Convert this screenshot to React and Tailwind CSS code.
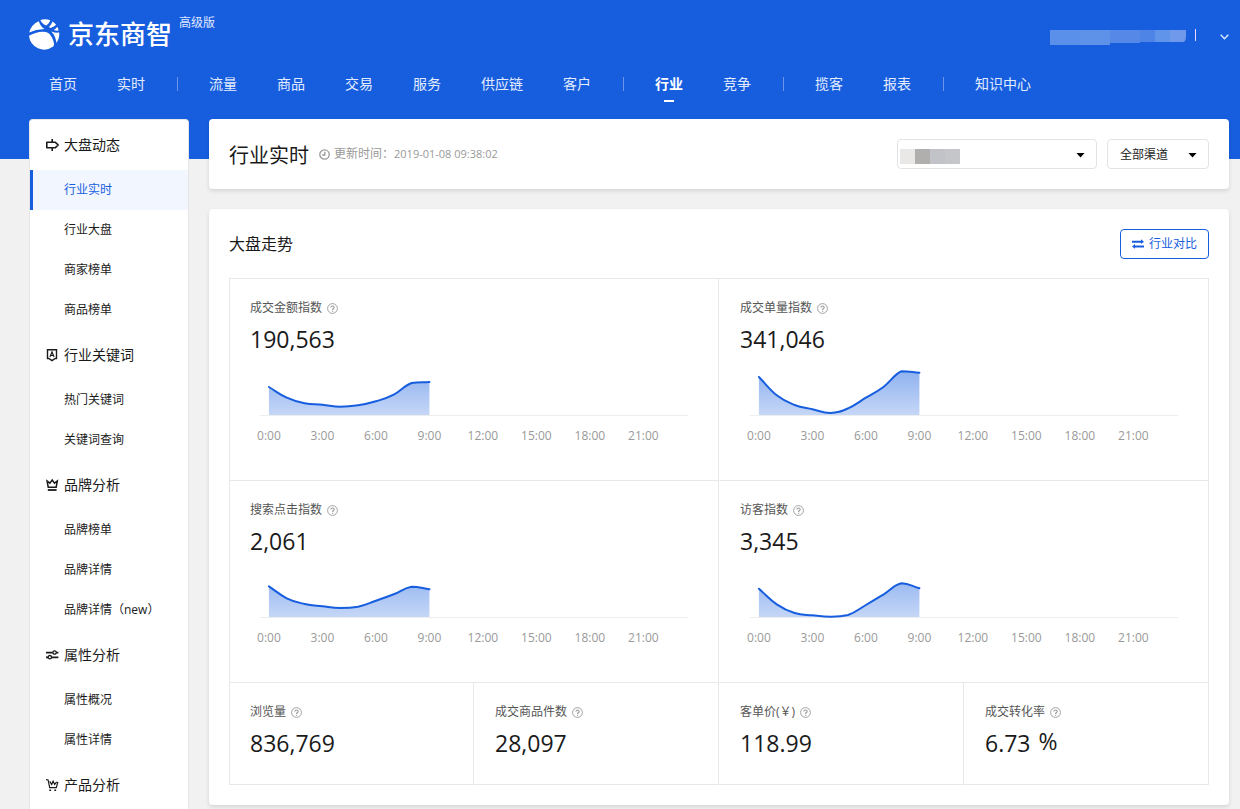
import { useId } from 'react';

const NAV_GROUPS = [
  ['首页', '实时'],
  ['流量', '商品', '交易', '服务', '供应链', '客户'],
  ['行业', '竞争'],
  ['揽客', '报表'],
  ['知识中心'],
];

const HOURS = ['0:00', '3:00', '6:00', '9:00', '12:00', '15:00', '18:00', '21:00'];

const TRENDS = [
  { label: '成交金额指数', value: '190,563', data: [28, 17.3, 11.7, 10.3, 8.3, 9.7, 13.7, 20.3, 32, 33] },
  { label: '成交单量指数', value: '341,046', data: [38, 19.7, 10, 5.7, 2, 6.7, 17.3, 28.3, 43.7, 42.3] },
  { label: '搜索点击指数', value: '2,061', data: [30.7, 18.7, 13, 10.7, 9, 10.3, 16.3, 22.7, 30.3, 27.7] },
  { label: '访客指数', value: '3,345', data: [28.3, 12.7, 4, 1.7, 0.3, 2, 12, 22.7, 33.7, 28.7] },
];

const TOTALS = [
  { label: '浏览量', value: '836,769' },
  { label: '成交商品件数', value: '28,097' },
  { label: '客单价(￥)', value: '118.99' },
  { label: '成交转化率', value: '6.73', unit: '%' },
];

function SignIcon() {
  return (
    <svg className="h-[14px] w-[14px]" viewBox="0 0 14 14" fill="none" stroke="currentColor" strokeWidth="1.6" aria-hidden="true">
      <path d="M.8 4.3h8.6L12.2 7 9.4 9.7H.8z" strokeLinejoin="round" />
      <path d="M6.2 1v3.3M6.2 9.7V13" />
    </svg>
  );
}

function KeywordIcon() {
  return (
    <svg className="h-[14px] w-[14px]" viewBox="0 0 14 14" fill="none" stroke="currentColor" aria-hidden="true">
      <path d="M1.5 1.8h9v8.700H9.200L6 12.600 2.800 10.500H1.500z" strokeWidth="1.4" />
      <path d="M3.900 9 6 3.800 8.100 9M4.600 7.400h2.800" strokeWidth="1.1" />
    </svg>
  );
}

function CrownIcon() {
  return (
    <svg className="h-[14px] w-[14px]" viewBox="0 0 14 14" fill="none" stroke="currentColor" strokeWidth="1.5" aria-hidden="true">
      <path d="M2.2 9.2 1.1 3l2.800 2.200L6.200 2l2.300 3.200L11.300 3l-1.100 6.200z" />
      <path d="M1.800 12h8.800" strokeWidth="1.8" />
    </svg>
  );
}

function SlidersIcon() {
  return (
    <svg className="h-[14px] w-[14px]" viewBox="0 0 14 14" fill="none" stroke="currentColor" strokeWidth="1.8" aria-hidden="true">
      <path d="M0 4.600h6.800M10.400 4.600h2M0 9.300h2M5.600 9.300h6.800" />
      <circle cx="8.600" cy="4.500" r="1.700" strokeWidth="1.3" />
      <circle cx="3.800" cy="9.200" r="1.700" strokeWidth="1.3" />
    </svg>
  );
}

function CartIcon() {
  return (
    <svg className="h-[14px] w-[14px]" viewBox="0 0 14 14" fill="none" stroke="currentColor" strokeWidth="1.2" aria-hidden="true">
      <path d="M0 1.600 2.100 2l1.600 7.600h6.600l1.600-5.800" />
      <path d="m3.700 3.400 2 3 1.400-3.200 1.600 3.200 2-2.600" />
      <path d="M3.300 12.300h1.800M8.300 12.300h1.800" strokeWidth="1.6" />
    </svg>
  );
}

const SIDEBAR = [
  { title: '大盘动态', icon: SignIcon, items: ['行业实时', '行业大盘', '商家榜单', '商品榜单'] },
  { title: '行业关键词', icon: KeywordIcon, items: ['热门关键词', '关键词查询'] },
  { title: '品牌分析', icon: CrownIcon, items: ['品牌榜单', '品牌详情', '品牌详情（new）'] },
  { title: '属性分析', icon: SlidersIcon, items: ['属性概况', '属性详情'] },
  { title: '产品分析', icon: CartIcon, items: [] },
];

function Logo() {
  return (
    <svg className="h-[31px] w-[31px]" viewBox="0 0 31 31" fill="#fff" aria-hidden="true">
      <path d="M0 16.800C4 14.400 9 13 14 12.800c4 0 6.200 1.200 8 4.200 1.800 2.800 2.900 5.600 3 8.200 0 .9-.3 1.700-.8 2.400A15.300 15.300 0 0 1 0 16.800z" />
      <path d="M.3 13.600C1 9 4.500 4.500 9.800 2.200c.7 2.800 2.700 5.800 5.700 7.800C9.500 10.300 4.500 11.500.3 13.600z" />
      <path d="M11.300.9c3.200-1 6.800-1 10 .3-.7 2.100-2.200 4-4.300 5.300-2.700-1.400-4.600-3.300-5.700-5.600z" />
      <path d="M23.500 2.400c1.400.9 2.600 2 3.600 3.400-1.600 1.500-3.500 2.500-5.600 3.100l-1.600-.9c1.600-1.600 2.800-3.400 3.600-5.600z" />
      <path d="M28.200 7.700c.7 1.200 1.200 2.500 1.500 3.900-1.500.2-3.200.1-4.900-.5 1.300-.9 2.500-2 3.400-3.400z" />
      <path d="M22.300 12.400c2.500 1.100 5.100 1.500 7.900 1.200.4 3.900-.6 7.400-2.800 10.400-.4-4.600-2-8.500-5.100-11.600z" />
    </svg>
  );
}

function Caret() {
  return (
    <svg className="pointer-events-none absolute top-[13px] right-3 h-[6px] w-[9px]" viewBox="0 0 9 6" aria-hidden="true">
      <path d="M.5 1h8L4.500 5.500z" fill="#000" />
    </svg>
  );
}

function HelpIcon() {
  return (
    <svg className="h-[11px] w-[11px]" viewBox="0 0 11 11" fill="none" stroke="#999" aria-hidden="true">
      <circle cx="5.500" cy="5.500" r="4.900" strokeWidth=".9" />
      <path d="M3.900 4.500c0-2 3.300-2 3.300-.1 0 1.200-1.600 1.100-1.600 2.500" strokeWidth="1.100" />
      <path d="M5.600 7.700v1.100" strokeWidth="1.200" />
    </svg>
  );
}

// smooth line through the hourly points, control points never pass a neighbour
function smoothPath(points) {
  const clamp = (v, a, b) => Math.min(Math.max(v, Math.min(a, b)), Math.max(a, b));
  const slope = (i) => {
    const prev = points[Math.max(i - 1, 0)];
    const next = points[Math.min(i + 1, points.length - 1)];
    return (next[1] - prev[1]) / (next[0] - prev[0]);
  };
  let d = `M${points[0][0]} ${points[0][1]}`;
  for (let i = 1; i < points.length; i++) {
    const [x0, y0] = points[i - 1];
    const [x1, y1] = points[i];
    const dx = (x1 - x0) * 0.42;
    const c0 = clamp(y0 + slope(i - 1) * dx, y0, y1);
    const c1 = clamp(y1 - slope(i) * dx, y0, y1);
    d += `C${x0 + dx} ${c0} ${x1 - dx} ${c1} ${x1} ${y1}`;
  }
  return d;
}

function TrendChart({ data }) {
  const id = useId();
  const step = 428 / 24;
  const points = data.map((v, i) => [step * (i + 0.5), 49 - v]);
  const line = smoothPath(points);

  return (
    <div className="mt-[11px] px-[10px]">
      <svg className="block h-[50px] w-full" viewBox="0 0 428 50" preserveAspectRatio="none" aria-hidden="true">
        <defs>
          <linearGradient id={id} gradientUnits="userSpaceOnUse" x1="0" y1="5" x2="0" y2="49">
            <stop offset="0" stopColor="#175edf" stopOpacity=".48" />
            <stop offset="1" stopColor="#175edf" stopOpacity=".25" />
          </linearGradient>
        </defs>
        <path d="M0 49.500H428" stroke="#eee" />
        <path d={`${line}V49H${points[0][0]}Z`} fill={`url(#${id})`} />
        <path d={line} fill="none" stroke="#175edf" strokeWidth="2" strokeLinecap="round" vectorEffect="non-scaling-stroke" />
      </svg>
      <div className="mt-[11px] grid grid-cols-8 text-xs leading-[18px] text-[#999]">
        {HOURS.map((hour) => (
          <div key={hour} className="flex w-1/3 justify-center whitespace-nowrap">
            <span>{hour}</span>
          </div>
        ))}
      </div>
    </div>
  );
}

function Metric({ label, value, unit }) {
  return (
    <>
      <div className="flex items-center gap-[5px] text-xs leading-[18px] text-[#555]">
        <span>{label}</span>
        <HelpIcon />
      </div>
      <div className="mt-[6px] flex gap-2 text-[23px] leading-8 text-[#1a1a1a]">
        <span>{value}</span>
        {unit && <span className="-mt-[2px]">{unit}</span>}
      </div>
    </>
  );
}

function Header() {
  return (
    <header className="h-[159px] bg-[#175edf] text-white">
      <div className="flex h-16 items-start justify-between pr-[11px] pl-[29px]">
        <div className="flex">
          <a href="#" className="mt-[19px] flex items-center gap-2">
            <Logo />
            <span className="text-[26px] leading-[31px] font-medium">京东商智</span>
          </a>
          <span className="mt-[15px] ml-[7px] text-xs leading-4 text-[#e0eaff]">高级版</span>
        </div>
        <div className="mt-[30px] flex items-start">
          <div className="flex h-[15px] w-[136px] overflow-hidden rounded-br-lg">
            <div className="w-[30px] bg-[#5a90ea]" />
            <div className="w-[30px] bg-[#5e92e8]" />
            <div className="h-[13px] w-[30px] bg-[#5689e7]" />
            <div className="h-3 w-[15px] bg-[#4d84e6]" />
            <div className="h-3 w-[15px] bg-[#5f94ea]" />
            <div className="h-3 w-4 bg-[#7099ec]" />
          </div>
          <div className="-mt-px ml-[9px] h-3 w-px bg-[#f0d8ff]" />
          <button type="button" aria-label="账号菜单" className="mt-1 ml-6">
            <svg className="h-[6px] w-[9px]" viewBox="0 0 9 6" fill="none" stroke="#dce8ff" strokeWidth="1.4" aria-hidden="true">
              <path d="M.7.7 4.500 4.700 8.300.7" />
            </svg>
          </button>
        </div>
      </div>
      <nav className="flex pl-[29px] text-sm leading-10 text-[#e3ecfd]">
        {NAV_GROUPS.map((group, i) => (
          <div key={group[0]} className="flex items-start">
            {i > 0 && (
              <div className="flex h-10 w-6 items-center justify-center">
                <div className="h-[14px] w-px bg-[#6f92ea]" />
              </div>
            )}
            {group.map((name) => (
              <a
                key={name}
                href="#"
                className={
                  name === '行业'
                    ? 'flex flex-col items-center px-5 font-bold text-white'
                    : 'px-5'
                }
              >
                {name}
                {name === '行业' && <span className="-mt-1 h-[2px] w-[10px] bg-white" />}
              </a>
            ))}
          </div>
        ))}
      </nav>
    </header>
  );
}

function Sidebar() {
  return (
    <aside className="w-40 shrink-0 rounded-t border-x border-t border-[#e6e6e6] bg-white text-[#1a1a1a]">
      {SIDEBAR.map(({ title, icon: Icon, items }) => (
        <section key={title}>
          <h2 className="flex h-[50px] items-center gap-1 pl-4 text-sm">
            <Icon />
            <span>{title}</span>
          </h2>
          <ul className="text-xs leading-10">
            {items.map((item) => (
              <li key={item}>
                <a
                  href="#"
                  className={
                    item === '行业实时'
                      ? 'block border-l-3 border-[#175edf] bg-[#f2f6fe] pl-[31px] text-[#175edf]'
                      : 'block border-l-3 border-transparent pl-[31px]'
                  }
                >
                  {item}
                </a>
              </li>
            ))}
          </ul>
        </section>
      ))}
    </aside>
  );
}

function TitleBar() {
  return (
    <section className="flex h-[70px] items-center justify-between rounded bg-white px-5 shadow-[0_2px_4px_rgba(0,0,0,0.12)]">
      <div className="flex items-center">
        <h1 className="pt-1 text-xl leading-8">行业实时</h1>
        <svg className="ml-[10px] h-[11px] w-[11px]" viewBox="0 0 11 11" fill="none" stroke="#999" strokeWidth="1.300" aria-hidden="true">
          <circle cx="5.500" cy="5.500" r="4.700" />
          <path d="M5.800 2.700v3.300H3.200" />
        </svg>
        <p className="ml-1 text-xs text-[#999]">
          更新时间：<span className="text-[11px]">2019-01-08 09:38:02</span>
        </p>
      </div>
      <div className="flex gap-[10px] text-xs">
        <div className="relative">
          <select aria-label="类目" className="h-[30px] w-[200px] appearance-none rounded border border-[#e2e3e5] bg-white pl-3">
            <option value="" />
          </select>
          <div className="pointer-events-none absolute top-[10px] left-[3px] flex h-[15px]">
            <div className="w-[15px] bg-[#e9e8e6]" />
            <div className="w-[15px] bg-[#b0afae]" />
            <div className="w-[15px] bg-[#c1c3c8]" />
            <div className="w-[15px] bg-[#c5c6c9]" />
          </div>
          <Caret />
        </div>
        <div className="relative">
          <select aria-label="渠道" className="h-[30px] w-[102px] appearance-none rounded border border-[#e2e3e5] bg-white pt-px pl-3">
            <option>全部渠道</option>
          </select>
          <Caret />
        </div>
      </div>
    </section>
  );
}

function Overview() {
  return (
    <section className="rounded bg-white p-5 shadow-[0_2px_4px_rgba(0,0,0,0.12)]">
      <div className="flex h-[30px] items-center justify-between">
        <h2 className="text-base">大盘走势</h2>
        <button
          type="button"
          className="flex h-[30px] items-center gap-[5px] rounded border border-[#175edf] px-[11px] text-xs text-[#175edf]"
        >
          <svg className="h-3 w-3" viewBox="0 0 12 12" fill="currentColor" aria-hidden="true">
            <path d="M0 2.700h9V1.300L12 3.700 9 6V4.700H0zM12 9.400H3v1.400L0 8.400 3 6.100v1.300h9z" />
          </svg>
          <span>行业对比</span>
        </button>
      </div>
      <div className="mt-[19px] border-t border-[#e8e8e8]">
        <div className="grid grid-cols-2">
          {TRENDS.map((trend) => (
            <div
              key={trend.label}
              className="h-[202px] border-x border-b border-[#e8e8e8] border-l-transparent px-5 pt-5 nth-[2n+1]:border-l-[#e8e8e8]"
            >
              <Metric label={trend.label} value={trend.value} />
              <TrendChart data={trend.data} />
            </div>
          ))}
        </div>
        <div className="grid grid-cols-4">
          {TOTALS.map((total) => (
            <div
              key={total.label}
              className="h-[102px] border-x border-b border-[#e8e8e8] border-l-transparent px-5 pt-5 first:border-l-[#e8e8e8]"
            >
              <Metric {...total} />
            </div>
          ))}
        </div>
      </div>
    </section>
  );
}

export default function App() {
  return (
    <div className="min-h-screen bg-[#f1f1f1] font-['Open_Sans','Noto_Sans_CJK_SC',sans-serif] text-[#1a1a1a]">
      <Header />
      <div className="relative -mt-10 flex gap-5 pr-[11px] pl-[29px]">
        <Sidebar />
        <main className="flex min-w-0 flex-1 flex-col gap-5">
          <TitleBar />
          <Overview />
        </main>
      </div>
    </div>
  );
}
